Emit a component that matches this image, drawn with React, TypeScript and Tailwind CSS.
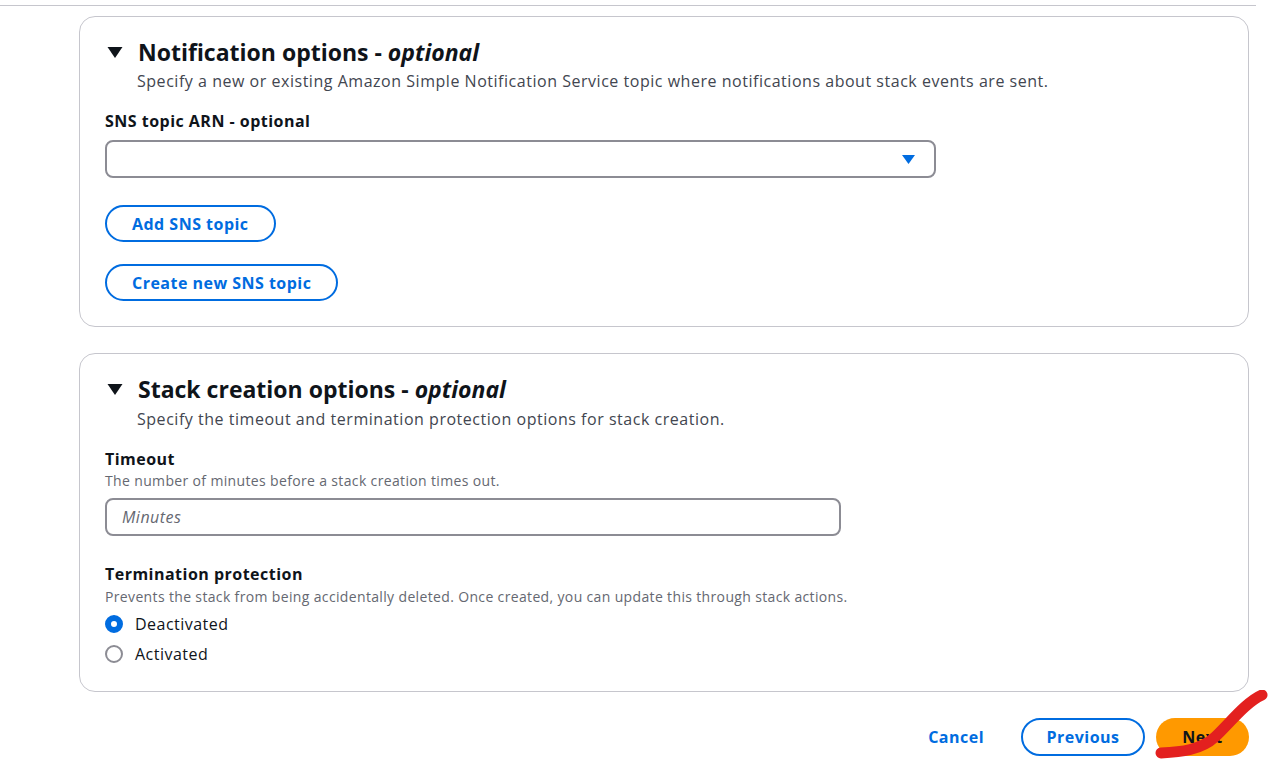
import React from "react";

const font = { fontFamily: '"Open Sans", "Noto Sans", Arial, sans-serif' };

function Caret() {
  return (
    <svg width="16" height="13" viewBox="0 0 16 13" className="shrink-0">
      <path d="M0.5 1 L15.5 1 L8 12 Z" fill="#0f141a" />
    </svg>
  );
}

function Pill({ children, className = "" }: { children: React.ReactNode; className?: string }) {
  return (
    <button
      className={
        "h-[37px] rounded-full border-2 border-[#006ce0] px-[25px] text-[16px] font-bold tracking-[0.03em] text-[#006ce0] leading-none bg-white " +
        className
      }
    >
      {children}
    </button>
  );
}

export default function App() {
  return (
    <div className="min-h-[767px] w-[1271px] bg-white text-[#0f141a]" style={font}>
      <div className="pt-[5px] pr-[15px]">
        <div className="h-px bg-[#c6c6cd]" />
      </div>
      <div className="pl-[79px] pr-[22px] pt-[10px]">
        {/* Card 1 */}
        <section className="rounded-[16px] border border-[#c6c6cd] pl-[25px] pr-[25px] pt-[20px] pb-[25px]">
          <div className="flex items-center gap-[15px] pl-[2px]">
            <Caret />
            <h2 className="text-[23px] leading-[30px] font-bold">
              Notification options - <i className="font-bold">optional</i>
            </h2>
          </div>
          <p className="ml-[32px] mt-[3px] text-[16px] leading-[22px] tracking-[0.033em] text-[#424650]">
            Specify a new or existing Amazon Simple Notification Service topic where notifications about stack events are sent.
          </p>
          <div className="mt-[18px] text-[16px] leading-[22px] font-bold tracking-[0.03em]">SNS topic ARN - optional</div>
          <div className="mt-[8px] flex h-[38px] w-[831px] items-center justify-end rounded-[8px] border-2 border-[#8c8c94] pr-[19px]">
            <svg width="13" height="9" viewBox="0 0 13 9">
              <path d="M0 0 L13 0 L6.5 9 Z" fill="#006ce0" />
            </svg>
          </div>
          <div className="mt-[27px]">
            <Pill>Add SNS topic</Pill>
          </div>
          <div className="mt-[22px]">
            <Pill>Create new SNS topic</Pill>
          </div>
        </section>

        {/* Card 2 */}
        <section className="mt-[26px] rounded-[16px] border border-[#c6c6cd] pl-[25px] pr-[25px] pt-[20px] pb-[26px]">
          <div className="flex items-center gap-[15px] pl-[2px]">
            <Caret />
            <h2 className="text-[23px] leading-[30px] font-bold">
              Stack creation options - <i className="font-bold">optional</i>
            </h2>
          </div>
          <p className="ml-[32px] mt-[4px] text-[16px] leading-[22px] tracking-[0.033em] text-[#424650]">
            Specify the timeout and termination protection options for stack creation.
          </p>
          <div className="mt-[18px] text-[16px] leading-[22px] font-bold tracking-[0.03em]">Timeout</div>
          <div className="mt-px text-[14px] leading-[20px] tracking-[0.025em] text-[#656871]">
            The number of minutes before a stack creation times out.
          </div>
          <div className="mt-[7px] flex h-[38px] w-[736px] items-center rounded-[8px] border-2 border-[#8c8c94] pl-[15px]">
            <span className="text-[16px] italic tracking-[0.03em] text-[#656871]">Minutes</span>
          </div>
          <div className="mt-[27px] text-[16px] leading-[22px] font-bold tracking-[0.03em]">Termination protection</div>
          <div className="mt-[2px] text-[14px] leading-[20px] tracking-[0.025em] text-[#656871]">
            Prevents the stack from being accidentally deleted. Once created, you can update this through stack actions.
          </div>
          <div className="mt-[6px] flex items-center gap-[12px] text-[16px] leading-[22px] tracking-[0.03em]">
            <span className="box-border h-[18px] w-[18px] rounded-full border-[6px] border-[#006ce0] bg-white" />
            <span>Deactivated</span>
          </div>
          <div className="mt-[8px] flex items-center gap-[12px] text-[16px] leading-[22px] tracking-[0.03em]">
            <span className="box-border h-[18px] w-[18px] rounded-full border-2 border-[#8c8c94] bg-white" />
            <span>Activated</span>
          </div>
        </section>

        {/* Footer */}
        <div className="relative mt-[26px] flex items-center justify-end">
          <button className="mr-[17px] h-[38px] px-[20px] text-[16px] font-bold tracking-[0.03em] text-[#006ce0]">Cancel</button>
          <button className="h-[38px] w-[124px] rounded-full border-2 border-[#006ce0] bg-white text-[16px] font-bold tracking-[0.03em] text-[#006ce0]">
            Previous
          </button>
          <button className="ml-[11px] h-[38px] w-[93px] rounded-full bg-[#ff9900] text-[16px] font-bold tracking-[0.03em] text-[#0f141a]">
            Next
          </button>
          <svg
            className="pointer-events-none absolute right-[-22px] top-[-28px]"
            width="120"
            height="80"
            viewBox="0 0 120 80"
          >
            <path
              d="M10 63 C 30 62, 50 60, 64 47 C 78 34, 95 12, 111 5"
              fill="none"
              stroke="#e3201f"
              strokeWidth="11"
              strokeLinecap="round"
            />
          </svg>
        </div>
      </div>
    </div>
  );
}
